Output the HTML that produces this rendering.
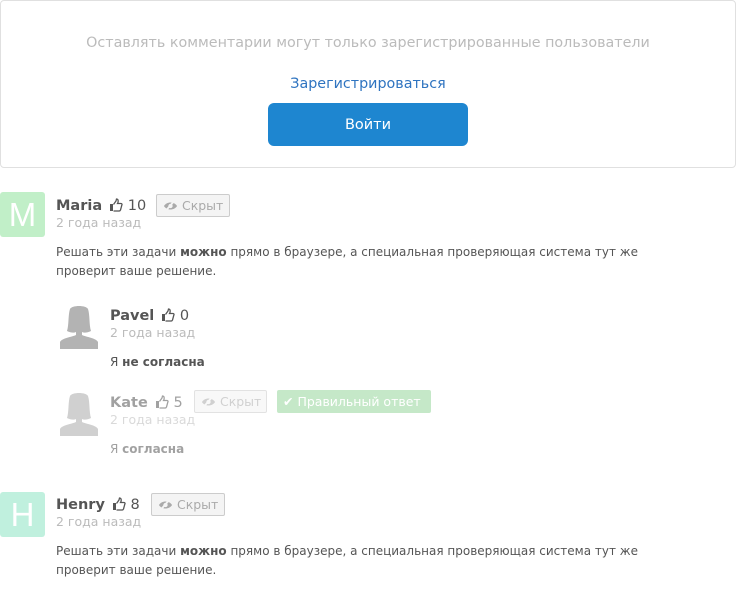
<!DOCTYPE html>
<html><head><meta charset="utf-8"><style>
*{margin:0;padding:0;box-sizing:border-box}
body{width:736px;height:603px;background:#fff;font-family:"DejaVu Sans","Liberation Sans",sans-serif;position:relative;overflow:hidden;color:#555}
.a{position:absolute;white-space:nowrap}
.box{position:absolute;left:0;top:0;width:736px;height:168px;border:1px solid #e0e0e0;border-radius:4px}
.btn{position:absolute;left:268px;top:103px;width:200px;height:43px;background:#1e86d0;border-radius:6px;color:#fff;font-size:14.5px;text-align:center;line-height:44px}
.av{position:absolute;width:45px;height:45px;border-radius:3px;color:#fff;font-size:33px;text-align:center;line-height:46px;font-family:"Liberation Sans",sans-serif}
.nm{font-weight:bold;font-size:14.5px;color:#555}
.dt{font-size:12.5px;color:#bbb}
.tx{font-size:12px;color:#555;line-height:19px}
.hb{position:absolute;height:23px;border:1px solid #ccc;background:#f4f4f4;border-radius:2px;font-size:12.5px;color:#aaa;line-height:21px;padding-left:6px}
.hb svg,.nm svg{vertical-align:-2px}
.ok{position:absolute;height:23px;background:#c5e8c8;border-radius:2px;color:#fff;font-size:12.5px;line-height:23px;padding:0 6px}
</style></head><body>
<div class="box"></div>
<div class="a" style="left:0;width:736px;text-align:center;top:35px;font-size:14.3px;color:#bbb">Оставлять комментарии могут только зарегистрированные пользователи</div>
<div class="a" style="left:0;width:736px;text-align:center;top:76px;font-size:14.3px;color:#2f74c0">Зарегистрироваться</div>
<div class="btn">Войти</div>

<svg width="0" height="0" style="position:absolute"><defs>
<symbol id="th" viewBox="0 0 14 14"><path d="M4.5 6.5 L7 3 L7.5 1 C9 1 9.5 2.5 9 4.5 L8.5 5.5 H12 C13 5.5 13.3 6.5 12.8 7.2 L11.5 12 C11.2 12.7 10.8 13 10 13 H4.5" fill="none" stroke="#555" stroke-width="1.3"/><rect x="1" y="6" width="3" height="7" fill="#555"/></symbol>
<symbol id="ey" viewBox="0 0 16 12"><path d="M1 6 C4 1 12 1 15 6 C12 11 4 11 1 6Z" fill="#aaa"/><circle cx="8" cy="6" r="2.3" fill="#f4f4f4"/><path d="M3 11 L12 0.5" stroke="#f4f4f4" stroke-width="2"/></symbol>
<symbol id="av" viewBox="0 0 38 44"><path d="M10 4 C12 0 26 0 28 4 C30 10 29 20 31 26 C27 28 24 28 22 27 L22 30 C26 32 36 33 38 37 V44 H0 V37 C2 33 12 32 16 30 L16 27 C14 28 11 28 7 26 C9 20 8 10 10 4Z" fill="currentColor"/></symbol>
</defs></svg>

<div class="av" style="left:0;top:192px;background:#c1efc8">M</div>
<div class="a nm" style="left:56px;top:198px">Maria <span style="font-weight:normal;margin-left:2px"><svg width="14" height="14"><use href="#th"/></svg> 10</span></div>
<div class="hb" style="left:156px;top:194px;width:74px"><svg width="15" height="12"><use href="#ey"/></svg> Скрыт</div>
<div class="a dt" style="left:56px;top:215px">2 года назад</div>
<div class="a tx" style="left:56px;top:243px">Решать эти задачи <b>можно</b> прямо в браузере, а специальная проверяющая система тут же<br>проверит ваше решение.</div>

<svg class="a" style="left:60px;top:305px;color:#b3b3b3" width="38" height="44"><use href="#av"/></svg>
<div class="a nm" style="left:110px;top:308px">Pavel <span style="font-weight:normal;margin-left:2px"><svg width="14" height="14"><use href="#th"/></svg> 0</span></div>
<div class="a dt" style="left:110px;top:325px">2 года назад</div>
<div class="a tx" style="left:110px;top:353px">Я <b>не согласна</b></div>

<div style="opacity:.55">
<svg class="a" style="left:60px;top:392px;color:#aaa" width="38" height="44"><use href="#av"/></svg>
<div class="a nm" style="left:110px;top:395px">Kate <span style="font-weight:normal;margin-left:2px"><svg width="14" height="14"><use href="#th"/></svg> 5</span></div>
<div class="hb" style="left:194px;top:390px;width:73px"><svg width="15" height="12"><use href="#ey"/></svg> Скрыт</div>
<div class="a dt" style="left:110px;top:412px">2 года назад</div>
<div class="a tx" style="left:110px;top:440px">Я <b>согласна</b></div>
</div>
<div class="ok" style="left:277px;top:390px;width:154px">✔ Правильный ответ</div>

<div class="av" style="left:0;top:492px;background:#c0f0de">H</div>
<div class="a nm" style="left:56px;top:497px">Henry <span style="font-weight:normal;margin-left:2px"><svg width="14" height="14"><use href="#th"/></svg> 8</span></div>
<div class="hb" style="left:151px;top:493px;width:74px"><svg width="15" height="12"><use href="#ey"/></svg> Скрыт</div>
<div class="a dt" style="left:56px;top:514px">2 года назад</div>
<div class="a tx" style="left:56px;top:542px">Решать эти задачи <b>можно</b> прямо в браузере, а специальная проверяющая система тут же<br>проверит ваше решение.</div>
</body></html>
